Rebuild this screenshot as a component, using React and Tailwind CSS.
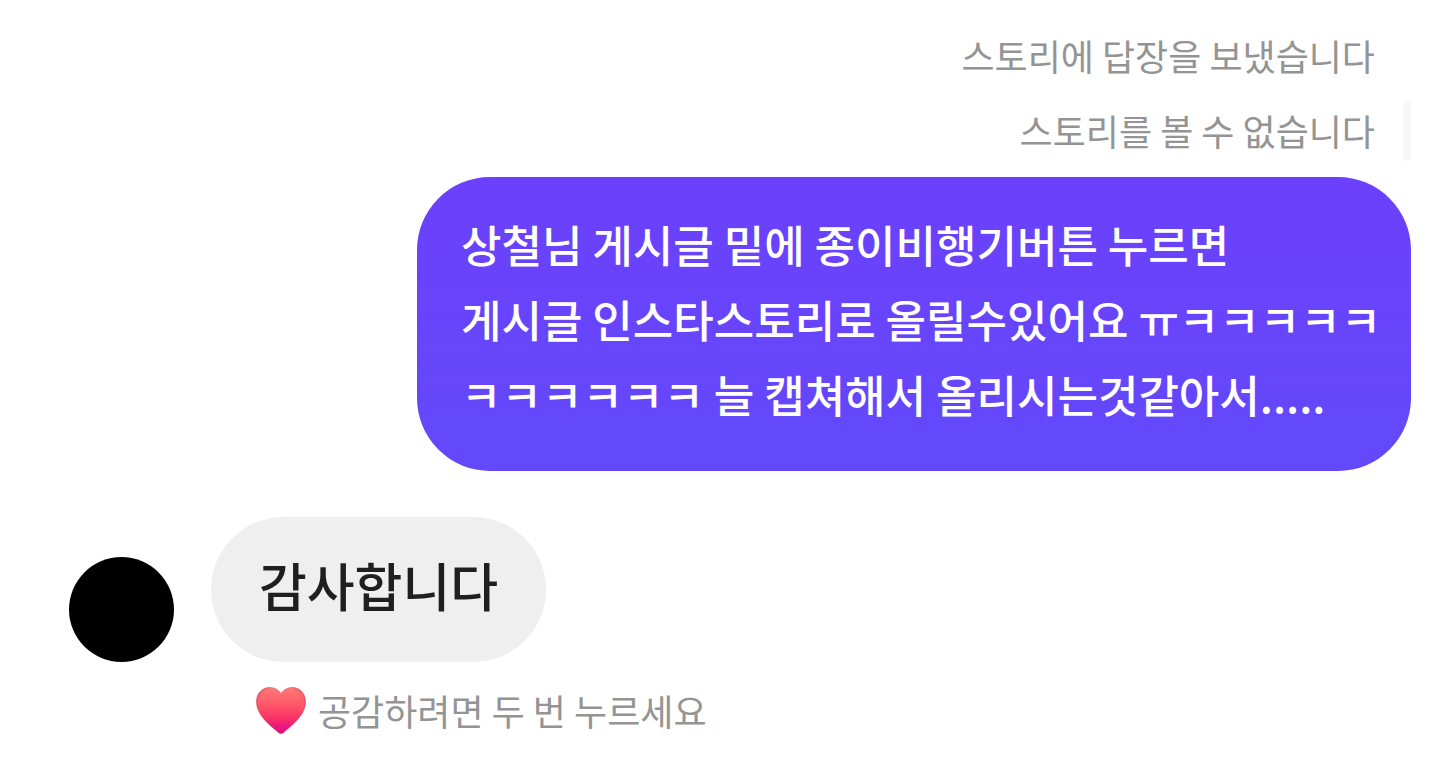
const FONT = "font-['Noto_Sans_CJK_KR','Noto_Sans',sans-serif]";

const HEART =
  "M25 6.6C22.4 2.6 18.4.5 13.6.5 6.2.5.5 6.6.5 14.6c0 13 11.6 22.2 21.6 30.7 1.9 1.6 3.9 1.6 5.8 0C37.9 36.800 49.500 27.600 49.500 14.600 49.500 6.600 43.800.5 36.400.5 31.600.5 27.600 2.600 25 6.600Z";

function HeartIcon() {
  return (
    <svg viewBox="0 0 50 47" className="h-[47px] w-[50px] shrink-0" role="img" aria-label="하트">
      <defs>
        <linearGradient id="heartFill" x1="0" y1="0" x2="0" y2="1">
          <stop offset="0" stopColor="#ff7a78" />
          <stop offset="0.35" stopColor="#ff5a6a" />
          <stop offset="0.65" stopColor="#fb3464" />
          <stop offset="0.85" stopColor="#ee1681" />
          <stop offset="1" stopColor="#e00a94" />
        </linearGradient>
        <radialGradient id="heartEdge" cx="0.5" cy="0.42" r="0.6">
          <stop offset="0.75" stopColor="#c02850" stopOpacity="0" />
          <stop offset="1" stopColor="#c02850" stopOpacity="0.4" />
        </radialGradient>
      </defs>
      <path d={HEART} fill="url(#heartFill)" />
      <path d={HEART} fill="url(#heartEdge)" stroke="#cf3054" strokeOpacity="0.5" />
    </svg>
  );
}

const sentLines = [
  "상철님 게시글 밑에 종이비행기버튼 누르면",
  "게시글 인스타스토리로 올릴수있어요 ㅠㅋㅋㅋㅋㅋ",
  "ㅋㅋㅋㅋㅋㅋ 늘 캡쳐해서 올리시는것같아서.....",
];

export default function App() {
  return (
    <main className={`bg-white pt-[18px] pr-[29px] pb-4 pl-[69px] ${FONT}`}>
      <section className="flex flex-col items-end">
        <p className="pr-9 text-4xl leading-[75px] text-[#949494]">스토리에 답장을 보냈습니다</p>
        <div className="mb-[9px] flex items-center gap-7">
          <p className="text-4xl leading-[75px] text-[#949494]">스토리를 볼 수 없습니다</p>
          <div className="h-[60px] w-2 rounded-sm bg-[#f6f7f9]" />
        </div>
        <div className="w-full max-w-[994px] rounded-[73px] bg-linear-to-b from-[#6c40fc] to-[#6249fa] px-11 pt-[30px] pb-[39px] text-[44px] leading-[75px] font-medium whitespace-nowrap text-white">
          {sentLines.map((line) => (
            <p key={line}>{line}</p>
          ))}
        </div>
      </section>

      <section className="mt-[46px]">
        <div className="flex items-end gap-[37px]">
          <div className="size-[105px] shrink-0 rounded-full bg-black" />
          <p className="min-w-[335px] rounded-[73px] bg-[#efefef] px-11 pt-[30px] pb-[40px] text-center text-[52px] leading-[75px] font-medium text-[#1f1f1f]">
            감사합니다
          </p>
        </div>
        <div className="mt-3 flex items-center gap-3 pl-[187px]">
          <HeartIcon />
          <p className="text-4xl leading-[72px] text-[#949494]">공감하려면 두 번 누르세요</p>
        </div>
      </section>
    </main>
  );
}
